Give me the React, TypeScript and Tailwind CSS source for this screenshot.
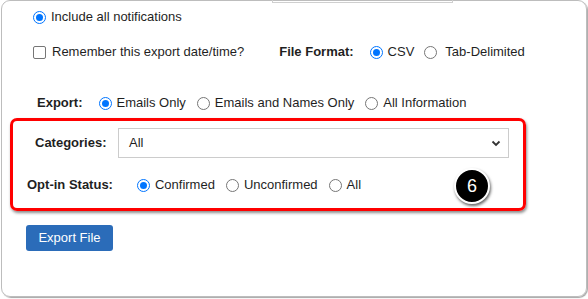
import React from "react";

const Radio = ({ checked = false }: { checked?: boolean }) => (
  <span
    className={`inline-flex h-[13px] w-[13px] shrink-0 items-center justify-center rounded-full border ${
      checked ? "border-[#0075ff]" : "border-[#767676]"
    } bg-white`}
  >
    {checked && <span className="h-[7px] w-[7px] rounded-full bg-[#0075ff]" />}
  </span>
);

const Option = ({ label, checked = false }: { label: string; checked?: boolean }) => (
  <label className="flex items-center gap-[5px]">
    <Radio checked={checked} />
    <span>{label}</span>
  </label>
);

export default function App() {
  return (
    <div className="h-[299px] w-[588px] bg-white text-[13px] text-[#1f1f1f] [font-family:'Liberation_Sans',Arial,sans-serif]">
      <div className="relative ml-px h-[297px] w-[586px] rounded-[9px] border border-[#bdbdbd] shadow-[1px_1px_1px_rgba(0,0,0,0.35)]">
        {/* cut off input above */}
        <div className="absolute left-[270px] top-[-1px] h-[3px] w-[181px] border-x border-b border-[#cfcfcf]" />

        {/* notifications */}
        <div className="flex h-[18px] items-center pl-[31px] pt-[14px]">
          <Option label="Include all notifications" checked />
        </div>

        {/* remember + file format */}
        <div className="mt-[24px] flex h-[18px] items-center pl-[31px]">
          <label className="flex items-center gap-[6px]">
            <span className="h-[13px] w-[13px] rounded-[2px] border border-[#767676] bg-white" />
            <span>Remember this export date/time?</span>
          </label>
          <span className="ml-[35px] font-bold">File Format:</span>
          <div className="ml-[16px] flex items-center gap-[10px]">
            <Option label="CSV" checked />
            <label className="flex items-center gap-[8px]">
              <Radio />
              <span>Tab-Delimited</span>
            </label>
          </div>
        </div>

        {/* export */}
        <div className="mt-[33px] flex h-[18px] items-center pl-[35px]">
          <span className="font-bold">Export:</span>
          <div className="ml-[16px] flex items-center gap-[11px]">
            <Option label="Emails Only" checked />
            <Option label="Emails and Names Only" />
            <Option label="All Information" />
          </div>
        </div>

        {/* highlighted block */}
        <div className="relative ml-[8px] mt-[6px] w-[516px] rounded-[7px] border-[3px] border-[#f00] pb-[14px] pt-[7px] shadow-[1px_2px_3px_rgba(0,0,0,0.45)]">
          <div className="flex items-center">
            <span className="ml-[22px] w-[78px] font-bold">Categories:</span>
            <div className="ml-[5px] flex h-[30px] w-[391px] items-center justify-between border border-[#cccccc] pl-[10px] pr-[6px]">
              <span>All</span>
              <svg width="12" height="12" viewBox="0 0 12 12">
                <path d="M2.5 4.5 L6 8 L9.5 4.5" fill="none" stroke="#333" strokeWidth="1.8" />
              </svg>
            </div>
          </div>
          <div className="mt-[18px] flex h-[18px] items-center">
            <span className="ml-[14px] font-bold">Opt-in Status:</span>
            <div className="ml-[24px] flex items-center gap-[11px]">
              <Option label="Confirmed" checked />
              <Option label="Unconfirmed" />
              <Option label="All" />
            </div>
          </div>
          <div className="absolute left-[441px] top-[47px] flex h-[36px] w-[36px] items-center justify-center rounded-full border-2 border-white bg-black text-[18px] text-white shadow-[1px_2px_3px_rgba(0,0,0,0.6)] [font-family:'Liberation_Sans',Arial,sans-serif]">
            6
          </div>
        </div>

        {/* button */}
        <button className="ml-[24px] mt-[14px] flex h-[26px] w-[87px] items-center justify-center rounded-[3px] bg-[#2b6cb9] text-[13px] text-white">
          Export File
        </button>
      </div>
    </div>
  );
}
